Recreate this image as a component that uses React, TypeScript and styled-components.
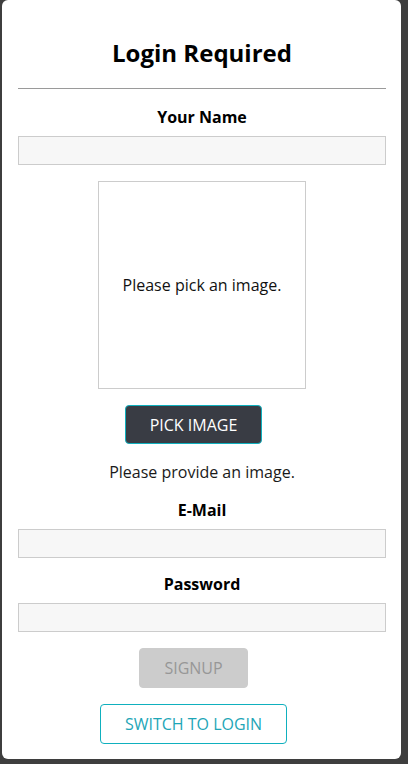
import React from "react";
import styled, { createGlobalStyle } from "styled-components";

const Global = createGlobalStyle`
  html, body { margin: 0; padding: 0; background: #3e3e3e; }
  body { font-family: "Open Sans", "Noto Sans", sans-serif; }
  * { box-sizing: border-box; }
`;

const Page = styled.div`
  padding: 0 7px 4px 2px;
  min-height: 764px;
`;

const Card = styled.div`
  background: #fff;
  border-radius: 6px;
  padding: 0 15px 15px 16px;
  display: flex;
  flex-direction: column;
  align-items: center;
`;

const Title = styled.h2`
  margin: 0;
  width: 100%;
  padding: 37px 0 19px;
  font-size: 24px;
  line-height: 32px;
  font-weight: 700;
  text-align: center;
  color: #000;
  border-bottom: 1px solid #9a9a9a;
`;

const Field = styled.div<{ $top: number }>`
  width: 100%;
  margin-top: ${(p) => p.$top}px;
  display: flex;
  flex-direction: column;
  align-items: center;
`;

const Label = styled.label`
  font-size: 16px;
  line-height: 24px;
  font-weight: 700;
  color: #000;
  margin-bottom: 7px;
`;

const Input = styled.input`
  width: 100%;
  height: 29px;
  background: #f7f7f7;
  border: 1px solid #ccc;
  font: inherit;
  padding: 0 4px;
`;

const Preview = styled.div`
  margin-top: 16px;
  width: 208px;
  height: 208px;
  border: 1px solid #ccc;
  display: flex;
  align-items: center;
  justify-content: center;
  font-size: 16px;
  color: #111;
`;

const Button = styled.button<{ $variant: "dark" | "disabled" | "outline"; $w: number; $top: number }>`
  margin: ${(p) => p.$top}px 17px 0 0;
  width: ${(p) => p.$w}px;
  height: ${(p) => (p.$variant === "dark" ? 39 : 40)}px;
  border-radius: 4px;
  font-family: "Open Sans", "Noto Sans", sans-serif;
  font-size: 16px;
  text-transform: uppercase;
  cursor: pointer;
  padding: 0;
  background: ${(p) =>
    p.$variant === "dark" ? "#393c44" : p.$variant === "disabled" ? "#cccccc" : "#ffffff"};
  color: ${(p) =>
    p.$variant === "dark" ? "#ffffff" : p.$variant === "disabled" ? "#979797" : "#1ea6b7"};
  border: 1px solid
    ${(p) => (p.$variant === "disabled" ? "#cccccc" : "#0fb0be")};
`;

const Hint = styled.p`
  margin: 16px 0 0;
  font-size: 16px;
  line-height: 24px;
  color: #1a1a1a;
`;

export default function App() {
  return (
    <>
      <Global />
      <Page>
        <Card>
          <Title>Login Required</Title>
          <Field $top={16}>
            <Label htmlFor="name">Your Name</Label>
            <Input id="name" type="text" />
          </Field>
          <Preview>Please pick an image.</Preview>
          <Button $variant="dark" $w={137} $top={16}>Pick Image</Button>
          <Hint>Please provide an image.</Hint>
          <Field $top={14}>
            <Label htmlFor="email">E-Mail</Label>
            <Input id="email" type="email" />
          </Field>
          <Field $top={14}>
            <Label htmlFor="password">Password</Label>
            <Input id="password" type="password" />
          </Field>
          <Button $variant="disabled" $w={109} $top={16} disabled>Signup</Button>
          <Button $variant="outline" $w={187} $top={16}>Switch to Login</Button>
        </Card>
      </Page>
    </>
  );
}
